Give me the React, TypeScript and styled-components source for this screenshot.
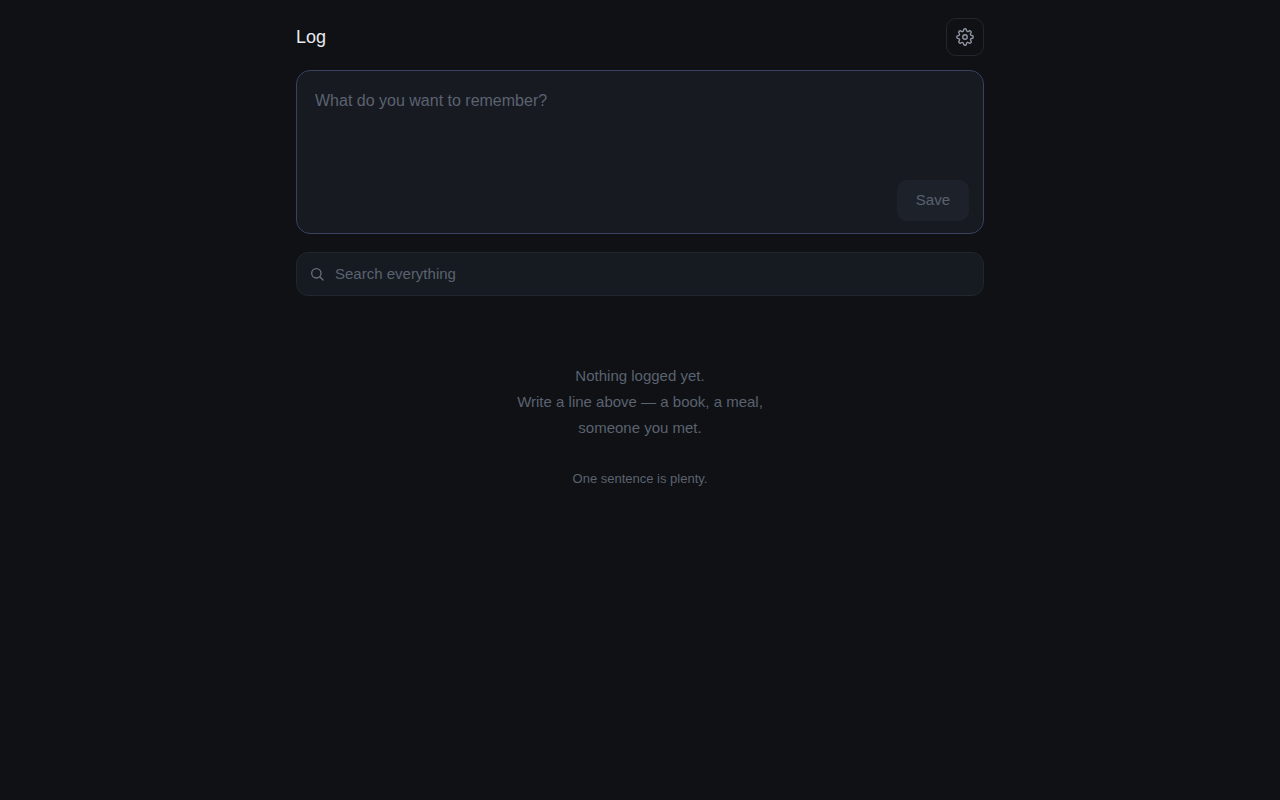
import React, { useState } from "react";
import styled, { createGlobalStyle } from "styled-components";

const GlobalStyle = createGlobalStyle`
  *, *::before, *::after { box-sizing: border-box; }
  body {
    margin: 0;
    background: #0f1114;
    color: #e8eaed;
    font-family: "Liberation Sans", Arial, sans-serif;
    font-size: 16px;
  }
  button, input, textarea { font: inherit; }
`;

const Page = styled.div`
  width: 100%;
  max-width: 720px;
  margin: 0 auto;
  padding: 18px 16px;
`;

const Header = styled.header`
  display: flex;
  align-items: center;
  justify-content: space-between;
  margin-bottom: 14px;
`;

const Title = styled.h1`
  margin: 0;
  font-size: 18px;
  line-height: 24px;
  font-weight: 400;
`;

const IconButton = styled.button`
  display: grid;
  place-items: center;
  width: 38px;
  height: 38px;
  padding: 0;
  border: 1px solid #22262e;
  border-radius: 10px;
  background: transparent;
  color: #9198a5;
  cursor: pointer;
`;

const Composer = styled.form`
  display: flex;
  flex-direction: column;
  padding: 18px 14px 12px 18px;
  border: 1px solid #3a4060;
  border-radius: 14px;
  background: #171a21;
`;

const Entry = styled.textarea`
  display: block;
  width: 100%;
  height: 91px;
  padding: 0;
  border: 0;
  outline: 0;
  resize: none;
  background: transparent;
  color: #e8eaed;
  font-size: 16px;
  line-height: 24px;
  &::placeholder { color: #5b6270; opacity: 1; }
`;

const SaveButton = styled.button`
  align-self: flex-end;
  padding: 10px 19px 11px;
  border: 0;
  border-radius: 10px;
  background: #1d2129;
  color: #5b6270;
  font-size: 15px;
  line-height: 20px;
`;

const SearchBar = styled.label`
  display: flex;
  align-items: center;
  gap: 10px;
  height: 44px;
  margin-top: 18px;
  padding: 0 12px;
  border: 1px solid #22262e;
  border-radius: 12px;
  background: #161a21;
  color: #6a707c;
`;

const SearchInput = styled.input`
  flex: 1;
  min-width: 0;
  padding: 0;
  border: 0;
  outline: 0;
  background: transparent;
  color: #e8eaed;
  font-size: 15px;
  line-height: 20px;
  &::placeholder { color: #5b6270; opacity: 1; }
`;

const EmptyState = styled.section`
  margin-top: 67px;
  text-align: center;
  color: #5b6270;
`;

const Message = styled.p`
  margin: 0;
  font-size: 15px;
  line-height: 26px;
`;

const Hint = styled.p`
  margin: 27px 0 0;
  font-size: 13px;
  line-height: 22px;
`;

const GearIcon = () => (
  <svg width="18" height="18" viewBox="0 0 24 24" fill="none" stroke="currentColor" strokeWidth="1.8" strokeLinecap="round" strokeLinejoin="round" aria-hidden="true">
    <circle cx="12" cy="12" r="3" />
    <path d="M19.4 15a1.65 1.65 0 0 0 .33 1.82l.06.06a2 2 0 0 1 0 2.83 2 2 0 0 1-2.83 0l-.06-.06a1.65 1.65 0 0 0-1.82-.33 1.65 1.65 0 0 0-1 1.51V21a2 2 0 0 1-2 2 2 2 0 0 1-2-2v-.09A1.65 1.65 0 0 0 9 19.4a1.65 1.65 0 0 0-1.82.33l-.06.06a2 2 0 0 1-2.83 0 2 2 0 0 1 0-2.83l.06-.06a1.65 1.65 0 0 0 .33-1.82 1.65 1.65 0 0 0-1.51-1H3a2 2 0 0 1-2-2 2 2 0 0 1 2-2h.09A1.65 1.65 0 0 0 4.6 9a1.65 1.65 0 0 0-.33-1.82l-.06-.06a2 2 0 0 1 0-2.83 2 2 0 0 1 2.83 0l.06.06a1.65 1.65 0 0 0 1.82.33H9a1.65 1.65 0 0 0 1-1.51V3a2 2 0 0 1 2-2 2 2 0 0 1 2 2v.09a1.65 1.65 0 0 0 1 1.51 1.65 1.65 0 0 0 1.82-.33l.06-.06a2 2 0 0 1 2.83 0 2 2 0 0 1 0 2.83l-.06.06a1.65 1.65 0 0 0-.33 1.82V9a1.65 1.65 0 0 0 1.51 1H21a2 2 0 0 1 2 2 2 2 0 0 1-2 2h-.09a1.65 1.65 0 0 0-1.51 1z" />
  </svg>
);

const SearchIcon = () => (
  <svg width="16" height="16" viewBox="0 0 24 24" fill="none" stroke="currentColor" strokeWidth="2" strokeLinecap="round" aria-hidden="true">
    <circle cx="11" cy="11" r="7" />
    <path d="m21 21-4.8-4.8" />
  </svg>
);

export default function App() {
  const [entry, setEntry] = useState("");
  const [query, setQuery] = useState("");

  return (
    <>
      <GlobalStyle />
      <Page>
        <Header>
          <Title>Log</Title>
          <IconButton type="button" aria-label="Settings"><GearIcon /></IconButton>
        </Header>
        <main>
          <Composer onSubmit={(e) => e.preventDefault()}>
            <Entry
              aria-label="New entry"
              placeholder="What do you want to remember?"
              value={entry}
              onChange={(e) => setEntry(e.target.value)}
            />
            <SaveButton type="submit" disabled={!entry.trim()}>Save</SaveButton>
          </Composer>
          <SearchBar>
            <SearchIcon />
            <SearchInput
              type="text"
              aria-label="Search everything"
              placeholder="Search everything"
              value={query}
              onChange={(e) => setQuery(e.target.value)}
            />
          </SearchBar>
          <EmptyState>
            <Message>
              Nothing logged yet.<br />
              Write a line above — a book, a meal,<br />
              someone you met.
            </Message>
            <Hint>One sentence is plenty.</Hint>
          </EmptyState>
        </main>
      </Page>
    </>
  );
}
